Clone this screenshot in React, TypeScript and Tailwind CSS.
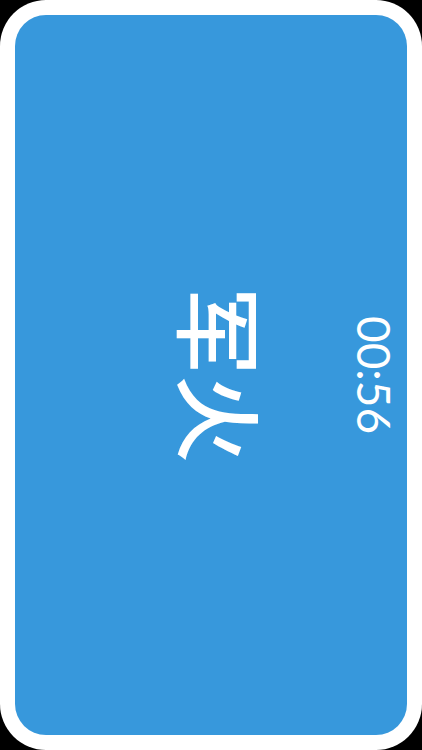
export default function App() {
  return (
    <div className="h-screen w-full bg-black">
      <main className="flex h-full w-full rounded-[46px] bg-white p-[15px]">
        <section className="grid flex-1 grid-cols-[1fr_auto_1fr] items-center rounded-[31px] bg-[#3798dc] font-['Noto_Sans_CJK_SC',sans-serif] text-white">
          <div />
          <h1 className="pl-[24px] text-[88px] leading-[88px] font-medium [writing-mode:sideways-rl]">军火</h1>
          <time className="justify-self-end pr-[9px] font-['Lato',sans-serif] text-[46px] leading-[48px] [writing-mode:sideways-rl]">00:56</time>
        </section>
      </main>
    </div>
  );
}
